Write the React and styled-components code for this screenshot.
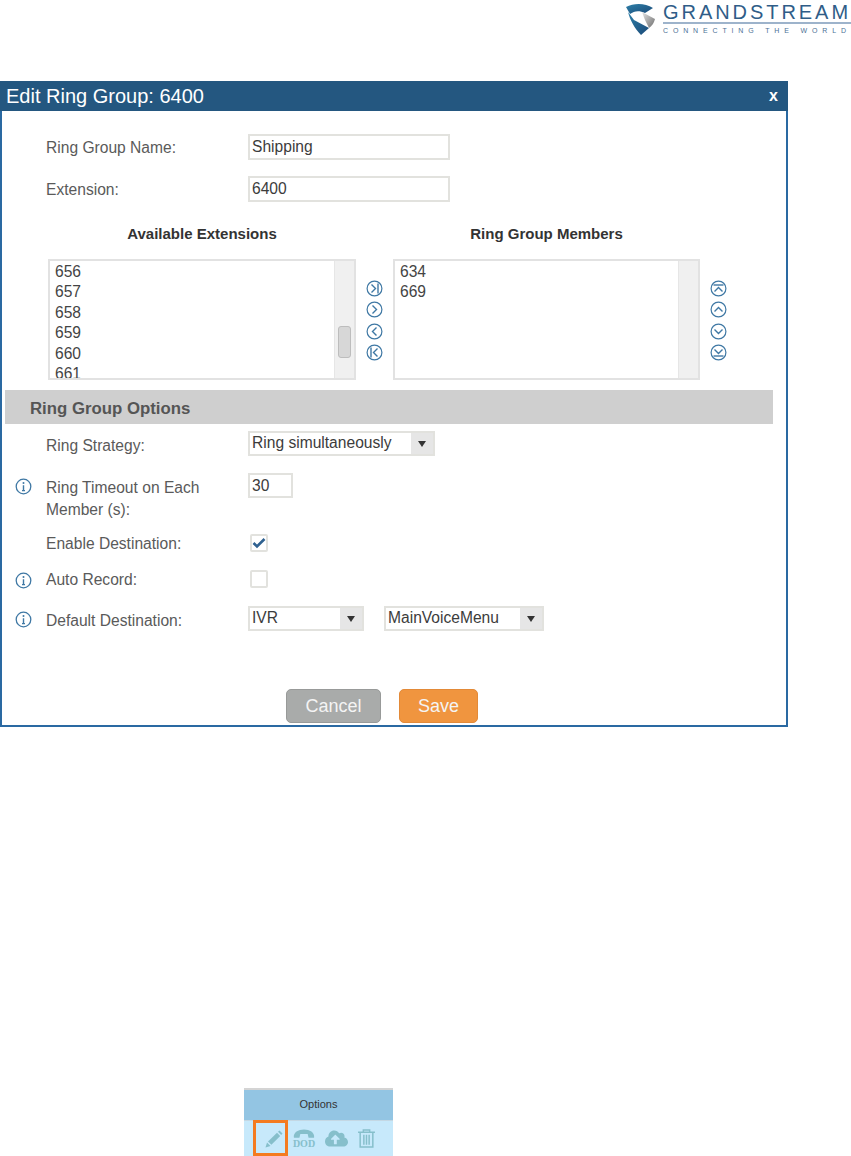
import React from 'react'
import styled, { createGlobalStyle } from 'styled-components'
import { FaCloudUploadAlt } from 'react-icons/fa'

const Global = createGlobalStyle`
  html, body {
    margin: 0;
    padding: 0;
    background: #fff;
    overflow: hidden;
  }
  body {
    font-family: "Liberation Sans", Arial, sans-serif;
  }
`

const Page = styled.div`
  width: 851px;
  height: 1156px;
  display: flex;
  flex-direction: column;
`

const TopBar = styled.div`
  height: 81px;
  display: flex;
  justify-content: flex-end;
  align-items: flex-start;
  gap: 7px;
  padding-top: 2px;
  box-sizing: border-box;
  overflow: hidden;
`

const BrandText = styled.div`
  width: 188px;
  display: flex;
  flex-direction: column;
  color: #2f5d88;
`

const BrandName = styled.div`
  font-size: 20px;
  line-height: 20px;
  letter-spacing: 2.95px;
  white-space: nowrap;
  border-bottom: 2px solid #9db3cb;
`

const BrandTag = styled.div`
  font-size: 7px;
  line-height: 10px;
  letter-spacing: 4.85px;
  white-space: nowrap;
  color: #4d7196;
  padding-top: 2px;
`

const Dialog = styled.div`
  width: 788px;
  height: 646px;
  box-sizing: border-box;
  border: 2px solid #2a69a2;
  border-top: 0;
  display: flex;
  flex-direction: column;
`

const DialogHeader = styled.div`
  height: 30px;
  margin: 0 -2px;
  background: #245780;
  color: #fff;
  display: flex;
  align-items: center;
  justify-content: space-between;
  padding: 0 10px 0 6px;
  font-size: 20px;
`

const CloseX = styled.span`
  font-weight: bold;
  font-size: 16px;
`

const FormTop = styled.div`
  margin-top: 23px;
  display: flex;
  flex-direction: column;
  gap: 16px;
`

const Row = styled.div`
  display: grid;
  grid-template-columns: 44px 202px 1fr;
  grid-template-rows: minmax(0, 1fr);
  align-items: ${(props) => (props.$start ? 'start' : 'center')};
  height: ${(props) => props.$height}px;
  margin-top: ${(props) => props.$top || 0}px;
`

const InfoCell = styled.div`
  display: flex;
  justify-content: flex-end;
  padding-right: 14px;
  padding-top: ${(props) => (props.$offset ? '5px' : '2px')};
`

const Label = styled.div`
  font-size: 15.6px;
  line-height: 22px;
  color: #5a5a5a;
  padding-top: ${(props) => props.$pad || 2}px;
`

const TextInput = styled.div`
  width: ${(props) => props.$width}px;
  height: ${(props) => props.$height || 25}px;
  box-sizing: border-box;
  border: 2px solid #e2e2de;
  background: #fff;
  padding-left: 2px;
  font-size: 15.6px;
  line-height: ${(props) => (props.$height || 25) - 4}px;
  color: #3c3c3c;
`

const Controls = styled.div`
  display: flex;
  gap: 20px;
  align-items: center;
`

const Select = styled.div`
  width: ${(props) => props.$width}px;
  height: 25px;
  box-sizing: border-box;
  border: 2px solid #e2e2de;
  display: flex;
  justify-content: space-between;
  font-size: 15.6px;
  line-height: 19px;
  color: #3c3c3c;
`

const SelectValue = styled.span`
  padding-left: 2px;
  white-space: nowrap;
`

const SelectArrow = styled.span`
  width: 22px;
  background: #e6e6e6;
  display: flex;
  align-items: center;
  justify-content: center;
  &::after {
    content: '';
    border-left: 4px solid transparent;
    border-right: 4px solid transparent;
    border-top: 6px solid #333;
  }
`

const Checkbox = styled.div`
  width: 18px;
  height: 18px;
  margin-left: 2px;
  box-sizing: border-box;
  border: 2px solid #e2e2de;
  border-radius: 2px;
  display: flex;
  align-items: center;
  justify-content: center;
`

const Heads = styled.div`
  margin-top: 22px;
  height: 20px;
  display: grid;
  grid-template-columns: 46px 308px 37px 307px;
  font-size: 15px;
  line-height: 20px;
  font-weight: bold;
  color: #333;
  text-align: center;
`

const Lists = styled.div`
  margin-top: 15px;
  padding-left: 46px;
  display: flex;
`

const ListBox = styled.div`
  width: ${(props) => props.$width}px;
  height: 121px;
  box-sizing: border-box;
  border: 2px solid #e2e2e2;
  display: flex;
  justify-content: space-between;
  overflow: hidden;
`

const ListItems = styled.div`
  padding: 1px 0 0 5px;
  font-size: 15.6px;
  line-height: 20.4px;
  color: #444;
`

const ScrollTrack = styled.div`
  width: 19px;
  background: #f0f0f0;
  border-left: 1px solid #e6e6e6;
  display: flex;
  justify-content: center;
  align-items: flex-start;
`

const ScrollThumb = styled.div`
  width: 13px;
  height: 32px;
  margin-top: 65px;
  box-sizing: border-box;
  background: #d7d7d7;
  border: 1px solid #bdbdbd;
  border-radius: 3px;
`

const ArrowColumn = styled.div`
  width: ${(props) => props.$width}px;
  display: flex;
  flex-direction: column;
  align-items: center;
  gap: 4.4px;
  padding-top: 21px;
  box-sizing: border-box;
`

const Band = styled.div`
  margin: 10px 0 0 3px;
  width: 768px;
  height: 34px;
  box-sizing: border-box;
  padding-left: 25px;
  background: #cfcfcf;
  color: #555;
  font-size: 16.8px;
  font-weight: bold;
  line-height: 37px;
`

const Footer = styled.div`
  margin-top: 58px;
  padding-left: 284px;
  display: flex;
  gap: 18px;
`

const Button = styled.div`
  width: ${(props) => props.$width}px;
  height: 34px;
  box-sizing: border-box;
  border-radius: 5px;
  border: 1px solid ${(props) => props.$edge};
  background: ${(props) => props.$bg};
  color: #f4f4f4;
  font-size: 18px;
  line-height: 32px;
  text-align: center;
`

const OptionsTable = styled.div`
  margin: 361px 0 0 244px;
  width: 149px;
  height: 68px;
  position: relative;
  display: flex;
  flex-direction: column;
`

const OptionsHead = styled.div`
  height: 33px;
  background: #93c5e3;
  border-top: 2px solid #d4d4d4;
  border-bottom: 1px solid #c4d8e4;
  box-sizing: border-box;
  text-align: center;
  font-size: 11px;
  line-height: 28px;
  color: #333;
`

const OptionsBody = styled.div`
  flex: 1;
  background: #c7e9fb;
  display: flex;
  align-items: center;
  padding: 0 0 0 21px;
  gap: 10px;
  color: #86bfcb;
`

const Highlight = styled.div`
  position: absolute;
  left: 9px;
  top: 32px;
  width: 35px;
  height: 36px;
  box-sizing: border-box;
  border: 3px solid #f47b20;
`

const ArrowIcon = ({ turn = 0, bar = false }) => (
  <svg width="17" height="17" viewBox="0 0 17 17" fill="none" stroke="#3f78a4" strokeWidth="1.2">
    <circle cx="8.5" cy="8.5" r="7.4" />
    <g transform={`rotate(${turn} 8.5 8.5)`}>
      <path d={bar ? 'M5.5 4.5 L9.5 8.5 L5.5 12.5' : 'M6.5 4.5 L10.5 8.5 L6.5 12.5'} strokeWidth="1.4" />
      {bar && <path d="M12 3.5 V13.5" strokeWidth="1.4" />}
    </g>
  </svg>
)

const InfoIcon = () => (
  <svg width="17" height="17" viewBox="0 0 17 17" fill="none" stroke="#3f78a4">
    <circle cx="8.5" cy="8.5" r="7.3" strokeWidth="1.3" />
    <circle cx="8.5" cy="5" r="1" fill="#3f78a4" stroke="none" />
    <path d="M8.5 7.2 V12.6 M7 12.6 H10" strokeWidth="1.4" />
  </svg>
)

const Tick = () => (
  <svg width="14" height="12" viewBox="0 0 14 12" fill="none" stroke="#2f6190" strokeWidth="2.6">
    <path d="M1.5 6 L5 9.5 L12.5 2" />
  </svg>
)

const Swoosh = () => (
  <svg width="31" height="34" viewBox="0 0 31 34">
    <defs>
      <linearGradient id="swooshBlue" x1="0" y1="0" x2="1" y2="1">
        <stop offset="0" stopColor="#2d7fa8" />
        <stop offset="1" stopColor="#1c4a78" />
      </linearGradient>
      <linearGradient id="swooshGray" x1="0" y1="0" x2="1" y2="1">
        <stop offset="0" stopColor="#e4e4e4" />
        <stop offset="1" stopColor="#6d6d6d" />
      </linearGradient>
    </defs>
    <path d="M1 5 C9 1 20 1 28 6 L20 11 C14 8 9 9 5 12 Z" fill="url(#swooshBlue)" />
    <path d="M3 10 L9 18 L24 26 L16 33 C10 27 5 18 3 10 Z" fill="url(#swooshBlue)" />
    <path d="M17 10 L30 17 C29 21 27 24 24 26 L20 18 Z" fill="url(#swooshGray)" />
  </svg>
)

const PencilIcon = () => (
  <svg width="18" height="18" viewBox="0 0 18 18" fill="currentColor">
    <path d="M0.5 17.5 L2 12.5 L5.5 16 Z" />
    <path d="M3 11.5 L12 2.8 L15.2 6 L6.4 14.8 Z" />
    <path d="M13 1.8 L14.5 0.5 L17.5 3.5 L16.2 5 Z" />
  </svg>
)

const DodWrap = styled.div`
  width: 22px;
  display: flex;
  flex-direction: column;
  align-items: center;
`

const DodText = styled.div`
  font-family: "Liberation Serif", serif;
  font-size: 10px;
  line-height: 9px;
  font-weight: bold;
`

const DodIcon = () => (
  <DodWrap>
    <svg width="22" height="10" viewBox="0 0 24 10" fill="currentColor">
      <path d="M1 9 C0 3 6 0 12 0 C18 0 24 3 23 9 L17 9 L16 5 L8 5 L7 9 Z" />
    </svg>
    <DodText>DOD</DodText>
  </DodWrap>
)

const TrashIcon = () => (
  <svg width="17" height="19" viewBox="0 0 16 18" fill="none" stroke="currentColor" strokeWidth="1.4">
    <path d="M0 3 H16 M5 3 V1 H11 V3" />
    <path d="M2 3 V17 H14 V3 M5.5 5.5 V15 M8 5.5 V15 M10.5 5.5 V15" />
  </svg>
)

const available = ['656', '657', '658', '659', '660', '661']
const members = ['634', '669']

export default function App() {
  return (
    <Page>
      <Global />
      <TopBar>
        <Swoosh />
        <BrandText>
          <BrandName>GRANDSTREAM</BrandName>
          <BrandTag>CONNECTING THE WORLD</BrandTag>
        </BrandText>
      </TopBar>

      <Dialog>
        <DialogHeader>
          <span>Edit Ring Group: 6400</span>
          <CloseX>x</CloseX>
        </DialogHeader>

        <FormTop>
          <Row $height={26}>
            <span />
            <Label>Ring Group Name:</Label>
            <TextInput $width={202} $height={26}>Shipping</TextInput>
          </Row>
          <Row $height={26}>
            <span />
            <Label>Extension:</Label>
            <TextInput $width={202} $height={26}>6400</TextInput>
          </Row>
        </FormTop>

        <Heads>
          <span />
          <span>Available Extensions</span>
          <span />
          <span>Ring Group Members</span>
        </Heads>

        <Lists>
          <ListBox $width={308}>
            <ListItems>
              {available.map((item) => <div key={item}>{item}</div>)}
            </ListItems>
            <ScrollTrack><ScrollThumb /></ScrollTrack>
          </ListBox>
          <ArrowColumn $width={37}>
            <ArrowIcon bar />
            <ArrowIcon />
            <ArrowIcon turn={180} />
            <ArrowIcon turn={180} bar />
          </ArrowColumn>
          <ListBox $width={307}>
            <ListItems>
              {members.map((item) => <div key={item}>{item}</div>)}
            </ListItems>
            <ScrollTrack />
          </ListBox>
          <ArrowColumn $width={36}>
            <ArrowIcon turn={-90} bar />
            <ArrowIcon turn={-90} />
            <ArrowIcon turn={90} />
            <ArrowIcon turn={90} bar />
          </ArrowColumn>
        </Lists>

        <Band>Ring Group Options</Band>

        <Row $height={25} $top={7}>
          <span />
          <Label $pad={4}>Ring Strategy:</Label>
          <Select $width={187}>
            <SelectValue>Ring simultaneously</SelectValue>
            <SelectArrow />
          </Select>
        </Row>
        <Row $height={47} $top={17} $start>
          <InfoCell $offset><InfoIcon /></InfoCell>
          <Label $pad={4}>Ring Timeout on Each Member (s):</Label>
          <TextInput $width={45}>30</TextInput>
        </Row>
        <Row $height={26} $top={10}>
          <span />
          <Label>Enable Destination:</Label>
          <Checkbox><Tick /></Checkbox>
        </Row>
        <Row $height={26} $top={10}>
          <InfoCell><InfoIcon /></InfoCell>
          <Label>Auto Record:</Label>
          <Checkbox />
        </Row>
        <Row $height={25} $top={14}>
          <InfoCell><InfoIcon /></InfoCell>
          <Label $pad={4}>Default Destination:</Label>
          <Controls>
            <Select $width={116}>
              <SelectValue>IVR</SelectValue>
              <SelectArrow />
            </Select>
            <Select $width={160}>
              <SelectValue>MainVoiceMenu</SelectValue>
              <SelectArrow />
            </Select>
          </Controls>
        </Row>

        <Footer>
          <Button $width={95} $bg="#a9abaa" $edge="#989a99">Cancel</Button>
          <Button $width={79} $bg="#f0953f" $edge="#e38a38">Save</Button>
        </Footer>
      </Dialog>

      <OptionsTable>
        <OptionsHead>Options</OptionsHead>
        <OptionsBody>
          <PencilIcon />
          <DodIcon />
          <FaCloudUploadAlt size={23} />
          <TrashIcon />
        </OptionsBody>
        <Highlight />
      </OptionsTable>
    </Page>
  )
}
